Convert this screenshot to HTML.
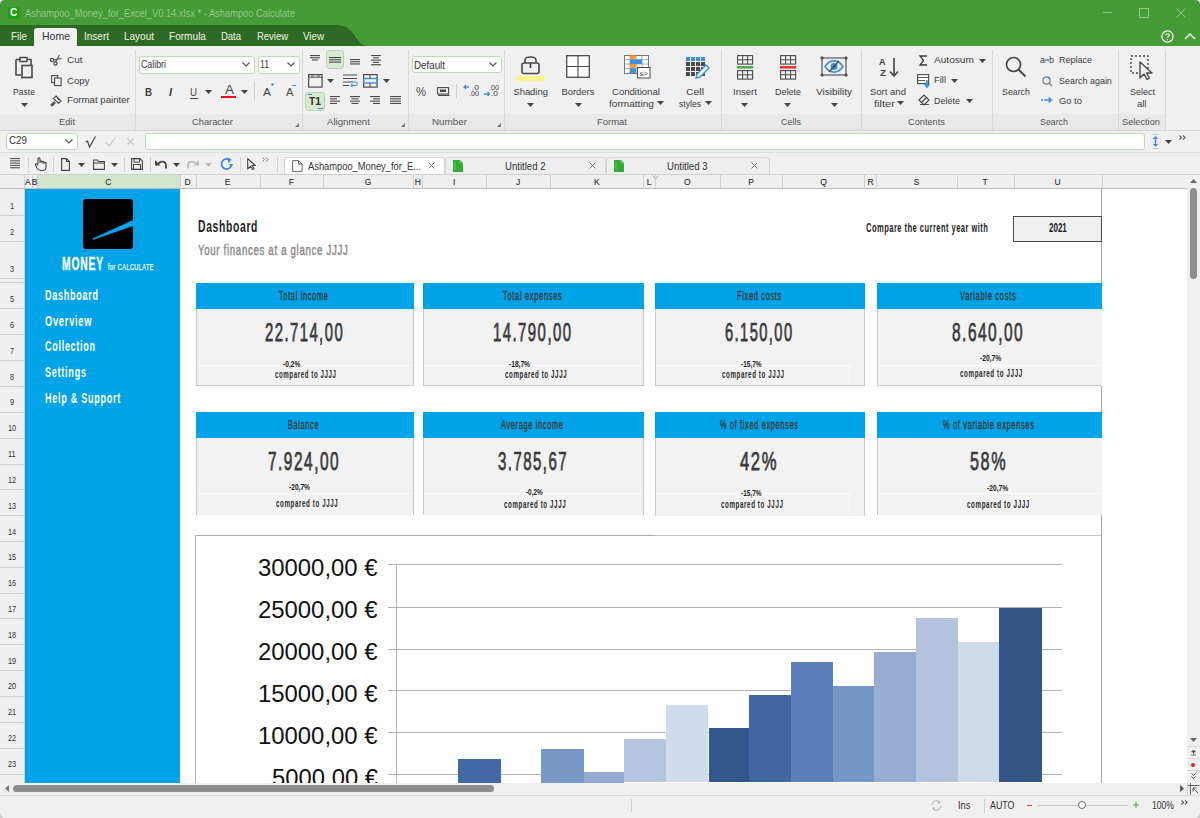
<!DOCTYPE html><html><head><meta charset="utf-8"><style>
html,body{margin:0;padding:0;}
body{width:1200px;height:818px;position:relative;overflow:hidden;background:#f0f0f0;font-family:"Liberation Sans", sans-serif;}
svg{overflow:visible}
</style></head><body>
<div style="position:absolute;left:0px;top:0px;width:1200px;height:46px;background:#459b35"></div>
<svg style="position:absolute;left:0px;top:25px;" width="380" height="21" viewBox="0 0 380 21"><path d="M0 0 H336 C347 0 351 5 355 11 C359 17 361 21 369 21 H0 Z" fill="#2d6b24"/></svg>
<div style="position:absolute;left:7.5px;top:7px;width:12.5px;height:12px;background:#1f9e1a;border-radius:2px"></div>
<div style="position:absolute;left:10.20px;top:7.29px;font-size:11px;line-height:11px;color:#fff;font-weight:bold;white-space:nowrap;transform:scaleX(0.9063);transform-origin:0 0;">C</div>
<svg style="position:absolute;left:0px;top:0px;" width="5" height="5" viewBox="0 0 5 5"><path d="M0 0 H4 C2 0.3 0.3 2 0 4 Z" fill="#e8e8e8"/></svg>
<svg style="position:absolute;left:1195px;top:0px;" width="5" height="5" viewBox="0 0 5 5"><path d="M5 0 H1 C3 0.3 4.7 2 5 4 Z" fill="#e8e8e8"/></svg>
<div style="position:absolute;left:25.00px;top:6.98px;font-size:11.6px;line-height:11.6px;color:#91c985;white-space:nowrap;transform:scaleX(0.8038);transform-origin:0 0;">Ashampoo_Money_for_Excel_V0.14.xlsx * - Ashampoo Calculate</div>
<div style="position:absolute;left:1103px;top:12px;width:9px;height:1px;background:#8fcb82"></div>
<div style="position:absolute;left:1139px;top:8px;width:8px;height:8px;border:1px solid #8fcb82"></div>
<svg style="position:absolute;left:1176px;top:8px;" width="10" height="10" viewBox="0 0 10 10"><path d="M0.5 0.5 L9.5 9.5 M9.5 0.5 L0.5 9.5" stroke="#8fcb82" stroke-width="0.9"/></svg>
<svg style="position:absolute;left:1161px;top:30px;" width="13" height="13" viewBox="0 0 13 13"><circle cx="6.5" cy="6.5" r="5.6" fill="none" stroke="#fff" stroke-width="1.2"/><path d="M4.6 5.2 C4.6 3.6 8.4 3.6 8.4 5.2 C8.4 6.4 6.5 6.4 6.5 7.8" fill="none" stroke="#fff" stroke-width="1.1"/><circle cx="6.5" cy="9.6" r="0.7" fill="#fff"/></svg>
<svg style="position:absolute;left:1184px;top:33px;" width="12" height="7" viewBox="0 0 12 7"><path d="M1 6 L6 1 L11 6" fill="none" stroke="#fff" stroke-width="1.4"/></svg>
<div style="position:absolute;left:34px;top:27.5px;width:43px;height:19px;background:#f0f0f0;border-radius:3px 3px 0 0"></div>
<div style="position:absolute;left:10.50px;top:31.02px;font-size:10.6px;line-height:10.6px;color:#f4f4e4;white-space:nowrap;transform:scaleX(0.9368);transform-origin:0 0;">File</div>
<div style="position:absolute;left:41.50px;top:31.02px;font-size:10.6px;line-height:10.6px;color:#333;white-space:nowrap;transform:scaleX(0.9903);transform-origin:0 0;">Home</div>
<div style="position:absolute;left:83.50px;top:31.02px;font-size:10.6px;line-height:10.6px;color:#f4f4e4;white-space:nowrap;transform:scaleX(0.9431);transform-origin:0 0;">Insert</div>
<div style="position:absolute;left:123.50px;top:31.02px;font-size:10.6px;line-height:10.6px;color:#f4f4e4;white-space:nowrap;transform:scaleX(0.9427);transform-origin:0 0;">Layout</div>
<div style="position:absolute;left:168.50px;top:31.02px;font-size:10.6px;line-height:10.6px;color:#f4f4e4;white-space:nowrap;transform:scaleX(0.9518);transform-origin:0 0;">Formula</div>
<div style="position:absolute;left:220.50px;top:31.02px;font-size:10.6px;line-height:10.6px;color:#f4f4e4;white-space:nowrap;transform:scaleX(0.8933);transform-origin:0 0;">Data</div>
<div style="position:absolute;left:256.50px;top:31.02px;font-size:10.6px;line-height:10.6px;color:#f4f4e4;white-space:nowrap;transform:scaleX(0.8920);transform-origin:0 0;">Review</div>
<div style="position:absolute;left:302.50px;top:31.02px;font-size:10.6px;line-height:10.6px;color:#f4f4e4;white-space:nowrap;transform:scaleX(0.9217);transform-origin:0 0;">View</div>
<div style="position:absolute;left:0px;top:46px;width:1200px;height:84px;background:#f0f0f0"></div>
<div style="position:absolute;left:0px;top:114px;width:1165px;height:16px;background:#e9e9e9"></div>
<div style="position:absolute;left:0px;top:130px;width:1200px;height:1px;background:#d4d4d4"></div>
<div style="position:absolute;left:135px;top:50px;width:1px;height:80px;background:#d9d9d9"></div>
<div style="position:absolute;left:302px;top:50px;width:1px;height:80px;background:#d9d9d9"></div>
<div style="position:absolute;left:408px;top:50px;width:1px;height:80px;background:#d9d9d9"></div>
<div style="position:absolute;left:504px;top:50px;width:1px;height:80px;background:#d9d9d9"></div>
<div style="position:absolute;left:721px;top:50px;width:1px;height:80px;background:#d9d9d9"></div>
<div style="position:absolute;left:861px;top:50px;width:1px;height:80px;background:#d9d9d9"></div>
<div style="position:absolute;left:992px;top:50px;width:1px;height:80px;background:#d9d9d9"></div>
<div style="position:absolute;left:1118px;top:50px;width:1px;height:80px;background:#d9d9d9"></div>
<div style="position:absolute;left:1165px;top:50px;width:1px;height:80px;background:#d9d9d9"></div>
<svg style="position:absolute;left:15px;top:56px;" width="19" height="23" viewBox="0 0 19 23"><path d="M1 3.5 H5 M13 3.5 H16 V9 M1 3.5 V19 H6" fill="none" stroke="#4a4a4a" stroke-width="1.6"/><path d="M5 1.5 H12 V5.5 H5 Z" fill="none" stroke="#4a4a4a" stroke-width="1.5"/><rect x="7" y="9.5" width="10" height="12" fill="none" stroke="#4a4a4a" stroke-width="1.6"/></svg>
<div style="position:absolute;left:13.00px;top:87.34px;font-size:9.4px;line-height:9.4px;color:#3c3c3c;white-space:nowrap;transform:scaleX(0.9153);transform-origin:0 0;">Paste</div>
<svg style="position:absolute;left:20.5px;top:102.5px;" width="7" height="4" viewBox="0 0 7 4"><path d="M0 0 H7 L3.5 4 Z" fill="#444"/></svg>
<svg style="position:absolute;left:50px;top:54px;" width="12" height="12" viewBox="0 0 12 12"><circle cx="2" cy="6" r="1.6" fill="none" stroke="#4a4a4a" stroke-width="1.2"/><circle cx="5.5" cy="9.5" r="1.6" fill="none" stroke="#4a4a4a" stroke-width="1.2"/><path d="M3.5 6 L11.5 4.5 M5.5 8 L9.5 1" stroke="#4a4a4a" stroke-width="1.1"/></svg>
<div style="position:absolute;left:67.00px;top:55.14px;font-size:9.4px;line-height:9.4px;color:#3c3c3c;white-space:nowrap;transform:scaleX(1.0597);transform-origin:0 0;">Cut</div>
<svg style="position:absolute;left:51px;top:75px;" width="11" height="11" viewBox="0 0 11 11"><rect x="0.6" y="0.6" width="6" height="7" fill="none" stroke="#4a4a4a" stroke-width="1.1"/><rect x="3.6" y="3.1" width="6.5" height="7.5" fill="#f0f0f0" stroke="#4a4a4a" stroke-width="1.1"/></svg>
<div style="position:absolute;left:67.00px;top:75.54px;font-size:9.4px;line-height:9.4px;color:#3c3c3c;white-space:nowrap;transform:scaleX(1.0254);transform-origin:0 0;">Copy</div>
<svg style="position:absolute;left:50px;top:95px;" width="12" height="12" viewBox="0 0 12 12"><path d="M6 1 L11 6 L8.5 8.5 L3.5 3.5 Z M4.5 6.5 L1 10 L2 11 L5.5 7.5" fill="none" stroke="#4a4a4a" stroke-width="1.2"/><path d="M7 3 L9 5" stroke="#4a4a4a" stroke-width="1"/></svg>
<div style="position:absolute;left:67.00px;top:95.34px;font-size:9.4px;line-height:9.4px;color:#3c3c3c;white-space:nowrap;transform:scaleX(1.0308);transform-origin:0 0;">Format painter</div>
<div style="position:absolute;left:59.00px;top:116.84px;font-size:9.4px;line-height:9.4px;color:#555;white-space:nowrap;transform:scaleX(0.9878);transform-origin:0 0;">Edit</div>
<div style="position:absolute;left:138.5px;top:56px;width:116px;height:17.5px;background:#fff;border:1px solid #bcdcb4;border-radius:3px;box-sizing:border-box"></div>
<div style="position:absolute;left:141.00px;top:59.19px;font-size:11px;line-height:11px;color:#333;white-space:nowrap;transform:scaleX(0.8020);transform-origin:0 0;">Calibri</div>
<svg style="position:absolute;left:241.5px;top:62px;" width="8" height="5" viewBox="0 0 8 5"><path d="M0.5 0.5 L4 4 L7.5 0.5" fill="none" stroke="#555" stroke-width="1.2"/></svg>
<div style="position:absolute;left:257.5px;top:56px;width:42px;height:17.5px;background:#fff;border:1px solid #bcdcb4;border-radius:3px;box-sizing:border-box"></div>
<div style="position:absolute;left:260.00px;top:59.19px;font-size:11px;line-height:11px;color:#333;white-space:nowrap;transform:scaleX(0.7883);transform-origin:0 0;">11</div>
<svg style="position:absolute;left:286.5px;top:62px;" width="8" height="5" viewBox="0 0 8 5"><path d="M0.5 0.5 L4 4 L7.5 0.5" fill="none" stroke="#555" stroke-width="1.2"/></svg>
<div style="position:absolute;left:144.50px;top:86.69px;font-size:11px;line-height:11px;color:#444;font-weight:bold;white-space:nowrap;transform:scaleX(0.8812);transform-origin:0 0;">B</div>
<div style="position:absolute;left:168.97px;top:86.69px;font-size:11px;line-height:11px;color:#444;white-space:nowrap;font-style:italic;font-weight:bold">I</div>
<div style="position:absolute;left:190.00px;top:86.69px;font-size:11px;line-height:11px;color:#444;white-space:nowrap;transform:scaleX(0.8812);transform-origin:0 0;">U</div>
<div style="position:absolute;left:190px;top:97.5px;width:8px;height:1px;background:#444"></div>
<svg style="position:absolute;left:204.5px;top:90px;" width="7" height="4" viewBox="0 0 7 4"><path d="M0 0 H7 L3.5 4 Z" fill="#444"/></svg>
<div style="position:absolute;left:224.50px;top:84.34px;font-size:12px;line-height:12px;color:#444;white-space:nowrap;transform:scaleX(1.1244);transform-origin:0 0;">A</div>
<div style="position:absolute;left:221px;top:95.5px;width:15px;height:2.5px;background:#e81123"></div>
<svg style="position:absolute;left:240.5px;top:90px;" width="7" height="4" viewBox="0 0 7 4"><path d="M0 0 H7 L3.5 4 Z" fill="#444"/></svg>
<div style="position:absolute;left:254px;top:81px;width:1px;height:19px;background:#cfcfcf"></div>
<div style="position:absolute;left:263.00px;top:86.69px;font-size:11px;line-height:11px;color:#444;white-space:nowrap;transform:scaleX(1.0903);transform-origin:0 0;">A</div>
<svg style="position:absolute;left:271px;top:83px;" width="3" height="3" viewBox="0 0 3 3"><circle cx="1.5" cy="1.5" r="1.2" fill="#3b8ee0"/></svg>
<div style="position:absolute;left:286.25px;top:86.69px;font-size:11px;line-height:11px;color:#444;white-space:nowrap;transform:scaleX(1.0222);transform-origin:0 0;">A</div>
<div style="position:absolute;left:292px;top:85px;width:4px;height:1px;background:#3b8ee0"></div>
<div style="position:absolute;left:191.50px;top:116.84px;font-size:9.4px;line-height:9.4px;color:#555;white-space:nowrap;transform:scaleX(0.9935);transform-origin:0 0;">Character</div>
<svg style="position:absolute;left:295px;top:123px;" width="4" height="4" viewBox="0 0 4 4"><path d="M4 0 V4 H0 Z" fill="#777"/></svg>
<div style="position:absolute;left:326px;top:50px;width:18px;height:19px;background:#d9ead3;border:1px solid #b5d6ac;border-radius:3px;box-sizing:border-box"></div>
<svg style="position:absolute;left:310px;top:55px;" width="20" height="20" viewBox="0 0 20 20"><rect x="0" y="0.0" width="10" height="1.1" fill="#4a4a4a"/><rect x="0" y="2.2" width="10" height="1.1" fill="#4a4a4a"/><rect x="2" y="4.4" width="6" height="1.1" fill="#4a4a4a"/></svg>
<svg style="position:absolute;left:329px;top:57px;" width="20" height="20" viewBox="0 0 20 20"><rect x="0" y="0.0" width="12" height="1.1" fill="#4a4a4a"/><rect x="0" y="2.3" width="12" height="1.1" fill="#4a4a4a"/><rect x="0" y="4.6" width="12" height="1.1" fill="#4a4a4a"/></svg>
<svg style="position:absolute;left:350px;top:59px;" width="20" height="20" viewBox="0 0 20 20"><rect x="0" y="0.0" width="10" height="1.1" fill="#4a4a4a"/><rect x="0" y="2.2" width="10" height="1.1" fill="#4a4a4a"/><rect x="0" y="4.4" width="10" height="1.1" fill="#4a4a4a"/></svg>
<svg style="position:absolute;left:371px;top:55px;" width="20" height="20" viewBox="0 0 20 20"><rect x="0" y="0.0" width="10" height="1.1" fill="#4a4a4a"/><rect x="2" y="2.3" width="6" height="1.1" fill="#4a4a4a"/><rect x="0" y="4.6" width="10" height="1.1" fill="#4a4a4a"/><rect x="2" y="6.8999999999999995" width="6" height="1.1" fill="#4a4a4a"/><rect x="0" y="9.2" width="10" height="1.1" fill="#4a4a4a"/></svg>
<svg style="position:absolute;left:308px;top:74px;" width="15" height="14" viewBox="0 0 15 14"><rect x="0.6" y="0.6" width="13.5" height="12.5" fill="none" stroke="#4a4a4a" stroke-width="1.2"/><path d="M0.6 3.2 H14" stroke="#4a4a4a" stroke-width="1"/><path d="M3 2 H6 M9 2 H12" stroke="#4a4a4a" stroke-width="0.8"/></svg>
<svg style="position:absolute;left:326.5px;top:79px;" width="7" height="4" viewBox="0 0 7 4"><path d="M0 0 H7 L3.5 4 Z" fill="#444"/></svg>
<svg style="position:absolute;left:343px;top:74px;" width="15" height="14" viewBox="0 0 15 14"><path d="M0 1 H14 M0 4.5 H14 M0 8 H10 M0 11.5 H6" stroke="#4a4a4a" stroke-width="1.1"/><path d="M10 8 H13 C14.5 8 14.5 11.5 13 11.5 H8 M9.5 10 L8 11.5 L9.5 13" fill="none" stroke="#3b8ee0" stroke-width="1.1"/></svg>
<svg style="position:absolute;left:363px;top:74px;" width="15" height="14" viewBox="0 0 15 14"><rect x="0.6" y="0.6" width="13.5" height="12.5" fill="none" stroke="#4a4a4a" stroke-width="1.2"/><rect x="0.6" y="4.5" width="13.5" height="4.5" fill="none" stroke="#3b8ee0" stroke-width="1.4"/><path d="M7 0.6 V4.5 M7 9 V13" stroke="#4a4a4a" stroke-width="1"/></svg>
<svg style="position:absolute;left:382.5px;top:79px;" width="7" height="4" viewBox="0 0 7 4"><path d="M0 0 H7 L3.5 4 Z" fill="#444"/></svg>
<div style="position:absolute;left:305px;top:92px;width:20px;height:19px;background:#d9ead3;border:1px solid #b5d6ac;border-radius:3px;box-sizing:border-box"></div>
<div style="position:absolute;left:309.00px;top:96.19px;font-size:11px;line-height:11px;color:#333;font-weight:bold;white-space:nowrap;transform:scaleX(0.9349);transform-origin:0 0;">T1</div>
<div style="position:absolute;left:308px;top:93.5px;width:4px;height:1px;background:#3b8ee0"></div>
<div style="position:absolute;left:318px;top:108px;width:5px;height:1px;background:#3b8ee0"></div>
<svg style="position:absolute;left:330px;top:96px;" width="20" height="20" viewBox="0 0 20 20"><rect x="0" y="0.0" width="10" height="1.1" fill="#4a4a4a"/><rect x="0" y="2.3" width="7" height="1.1" fill="#4a4a4a"/><rect x="0" y="4.6" width="10" height="1.1" fill="#4a4a4a"/><rect x="0" y="6.8999999999999995" width="7" height="1.1" fill="#4a4a4a"/></svg>
<svg style="position:absolute;left:350px;top:96px;" width="20" height="20" viewBox="0 0 20 20"><rect x="0" y="0.0" width="10" height="1.1" fill="#4a4a4a"/><rect x="1.5" y="2.3" width="7" height="1.1" fill="#4a4a4a"/><rect x="0" y="4.6" width="10" height="1.1" fill="#4a4a4a"/><rect x="1.5" y="6.8999999999999995" width="7" height="1.1" fill="#4a4a4a"/></svg>
<svg style="position:absolute;left:370px;top:96px;" width="20" height="20" viewBox="0 0 20 20"><rect x="0" y="0.0" width="10" height="1.1" fill="#4a4a4a"/><rect x="3" y="2.3" width="7" height="1.1" fill="#4a4a4a"/><rect x="0" y="4.6" width="10" height="1.1" fill="#4a4a4a"/><rect x="3" y="6.8999999999999995" width="7" height="1.1" fill="#4a4a4a"/></svg>
<svg style="position:absolute;left:390px;top:96px;" width="20" height="20" viewBox="0 0 20 20"><rect x="0" y="0.0" width="11" height="1.1" fill="#4a4a4a"/><rect x="0" y="2.3" width="11" height="1.1" fill="#4a4a4a"/><rect x="0" y="4.6" width="11" height="1.1" fill="#4a4a4a"/><rect x="0" y="6.8999999999999995" width="11" height="1.1" fill="#4a4a4a"/></svg>
<div style="position:absolute;left:326.50px;top:116.84px;font-size:9.4px;line-height:9.4px;color:#555;white-space:nowrap;transform:scaleX(1.0288);transform-origin:0 0;">Alignment</div>
<svg style="position:absolute;left:401px;top:123px;" width="4" height="4" viewBox="0 0 4 4"><path d="M4 0 V4 H0 Z" fill="#777"/></svg>
<div style="position:absolute;left:411.5px;top:56.4px;width:90px;height:17px;background:#fff;border:1px solid #bcdcb4;border-radius:3px;box-sizing:border-box"></div>
<div style="position:absolute;left:414.00px;top:59.59px;font-size:11px;line-height:11px;color:#333;white-space:nowrap;transform:scaleX(0.8895);transform-origin:0 0;">Default</div>
<svg style="position:absolute;left:488.5px;top:62.4px;" width="8" height="5" viewBox="0 0 8 5"><path d="M0.5 0.5 L4 4 L7.5 0.5" fill="none" stroke="#555" stroke-width="1.2"/></svg>
<div style="position:absolute;left:416.00px;top:85.84px;font-size:12px;line-height:12px;color:#4a4a4a;white-space:nowrap;transform:scaleX(0.9372);transform-origin:0 0;">%</div>
<svg style="position:absolute;left:437px;top:87px;" width="13" height="9" viewBox="0 0 13 9"><rect x="0.6" y="0.6" width="11" height="6.5" fill="none" stroke="#4a4a4a" stroke-width="1.1"/><rect x="3" y="2.5" width="6" height="2.5" fill="#4a4a4a"/><path d="M1 8.5 H12.5" stroke="#4a4a4a" stroke-width="1"/></svg>
<div style="position:absolute;left:456px;top:84px;width:1px;height:14px;background:#cfcfcf"></div>
<div style="position:absolute;left:472.00px;top:84.23px;font-size:8px;line-height:8px;color:#444;white-space:nowrap;transform:scaleX(1.0493);transform-origin:0 0;">.0</div>
<div style="position:absolute;left:469.00px;top:90.23px;font-size:8px;line-height:8px;color:#444;white-space:nowrap;transform:scaleX(0.8993);transform-origin:0 0;">.00</div>
<svg style="position:absolute;left:463px;top:84px;" width="7" height="6" viewBox="0 0 7 6"><path d="M6 3 H1 M3 1 L1 3 L3 5" fill="none" stroke="#3b8ee0" stroke-width="1.3"/></svg>
<div style="position:absolute;left:489.00px;top:84.23px;font-size:8px;line-height:8px;color:#444;white-space:nowrap;transform:scaleX(0.8993);transform-origin:0 0;">.00</div>
<div style="position:absolute;left:491.00px;top:90.23px;font-size:8px;line-height:8px;color:#444;white-space:nowrap;transform:scaleX(1.0493);transform-origin:0 0;">.0</div>
<svg style="position:absolute;left:484px;top:91px;" width="7" height="6" viewBox="0 0 7 6"><path d="M0 3 H5.5 M3.5 1 L5.5 3 L3.5 5" fill="none" stroke="#3b8ee0" stroke-width="1.3"/></svg>
<div style="position:absolute;left:431.50px;top:116.84px;font-size:9.4px;line-height:9.4px;color:#555;white-space:nowrap;transform:scaleX(1.0470);transform-origin:0 0;">Number</div>
<svg style="position:absolute;left:497px;top:123px;" width="4" height="4" viewBox="0 0 4 4"><path d="M4 0 V4 H0 Z" fill="#777"/></svg>
<svg style="position:absolute;left:521px;top:55px;" width="19" height="20" viewBox="0 0 19 20"><path d="M4 8 V5 C4 1 15 1 15 5 V8" fill="none" stroke="#4a4a4a" stroke-width="1.6"/><rect x="1" y="8" width="17" height="10.5" rx="2" fill="none" stroke="#4a4a4a" stroke-width="1.6"/><path d="M9.5 8 V13" stroke="#4a4a4a" stroke-width="1.8"/></svg>
<div style="position:absolute;left:516px;top:76px;width:29px;height:5px;background:#fff38a"></div>
<div style="position:absolute;left:513.45px;top:87.34px;font-size:9.4px;line-height:9.4px;color:#3c3c3c;white-space:nowrap;">Shading</div>
<svg style="position:absolute;left:527.2px;top:102.5px;" width="7" height="4" viewBox="0 0 7 4"><path d="M0 0 H7 L3.5 4 Z" fill="#444"/></svg>
<svg style="position:absolute;left:566px;top:55px;" width="24" height="23" viewBox="0 0 24 23"><rect x="0.7" y="0.7" width="22.6" height="21.6" fill="#fff" stroke="#4a4a4a" stroke-width="1.3"/><path d="M12 0.7 V22.3 M0.7 11.5 H23.3" stroke="#4a4a4a" stroke-width="1.1"/></svg>
<div style="position:absolute;left:561.50px;top:87.34px;font-size:9.4px;line-height:9.4px;color:#3c3c3c;white-space:nowrap;">Borders</div>
<svg style="position:absolute;left:574.5px;top:102.5px;" width="7" height="4" viewBox="0 0 7 4"><path d="M0 0 H7 L3.5 4 Z" fill="#444"/></svg>
<svg style="position:absolute;left:624px;top:55px;" width="27" height="24" viewBox="0 0 27 24"><rect x="0.5" y="0.5" width="24" height="18" fill="#fff" stroke="#777" stroke-width="1"/><path d="M0.5 4.5 H24.5" stroke="#999" stroke-width="0.8"/><path d="M0.5 9 H24.5" stroke="#999" stroke-width="0.8"/><path d="M0.5 13.5 H24.5" stroke="#999" stroke-width="0.8"/><path d="M6 0.5 V18.5" stroke="#999" stroke-width="0.8"/><path d="M12 0.5 V18.5" stroke="#999" stroke-width="0.8"/><path d="M18 0.5 V18.5" stroke="#999" stroke-width="0.8"/><rect x="6" y="0.5" width="6" height="4" fill="#f39c35"/><rect x="6" y="4.5" width="12" height="4.5" fill="#3b8ee0"/><rect x="6" y="9" width="6" height="4.5" fill="#f39c35"/><rect x="6" y="13.5" width="6" height="5" fill="#3b8ee0"/><rect x="13.5" y="12.5" width="12.5" height="10.5" fill="#fff" stroke="#4a4a4a" stroke-width="1"/><text x="19.7" y="20.5" font-size="7.5" text-anchor="middle" fill="#333" font-family="Liberation Sans">≤&gt;</text></svg>
<div style="position:absolute;left:612.00px;top:87.34px;font-size:9.4px;line-height:9.4px;color:#3c3c3c;white-space:nowrap;transform:scaleX(1.0206);transform-origin:0 0;">Conditional</div>
<div style="position:absolute;left:608.50px;top:99.34px;font-size:9.4px;line-height:9.4px;color:#3c3c3c;white-space:nowrap;transform:scaleX(1.0768);transform-origin:0 0;">formatting</div>
<svg style="position:absolute;left:656.5px;top:101px;" width="7" height="4" viewBox="0 0 7 4"><path d="M0 0 H7 L3.5 4 Z" fill="#444"/></svg>
<svg style="position:absolute;left:686px;top:57px;" width="24" height="23" viewBox="0 0 24 23"><rect x="0" y="0" width="4" height="4" fill="#3b8ee0"/><rect x="5" y="0" width="4" height="4" fill="#3b8ee0"/><rect x="10" y="0" width="4" height="4" fill="#3b8ee0"/><rect x="15" y="0" width="4" height="4" fill="#3b8ee0"/><rect x="0" y="5" width="4" height="4" fill="#4a4a4a"/><rect x="5" y="5" width="4" height="4" fill="#4a4a4a"/><rect x="10" y="5" width="4" height="4" fill="#4a4a4a"/><rect x="15" y="5" width="4" height="4" fill="#4a4a4a"/><rect x="0" y="10" width="4" height="4" fill="#4a4a4a"/><rect x="5" y="10" width="4" height="4" fill="#4a4a4a"/><rect x="10" y="10" width="4" height="4" fill="#4a4a4a"/><rect x="15" y="10" width="4" height="4" fill="#4a4a4a"/><rect x="0" y="15" width="4" height="4" fill="#4a4a4a"/><rect x="5" y="15" width="4" height="4" fill="#4a4a4a"/><rect x="10" y="15" width="4" height="4" fill="#4a4a4a"/><rect x="15" y="15" width="4" height="4" fill="#4a4a4a"/><path d="M10 21 L11 17 L20 8 L23 11 L14 20 Z" fill="#f0f0f0" stroke="#3b8ee0" stroke-width="1.4"/></svg>
<div style="position:absolute;left:686.00px;top:87.34px;font-size:9.4px;line-height:9.4px;color:#3c3c3c;white-space:nowrap;transform:scaleX(1.1116);transform-origin:0 0;">Cell</div>
<div style="position:absolute;left:679.00px;top:99.34px;font-size:9.4px;line-height:9.4px;color:#3c3c3c;white-space:nowrap;transform:scaleX(0.9156);transform-origin:0 0;">styles</div>
<svg style="position:absolute;left:704.5px;top:101px;" width="7" height="4" viewBox="0 0 7 4"><path d="M0 0 H7 L3.5 4 Z" fill="#444"/></svg>
<div style="position:absolute;left:597.00px;top:116.84px;font-size:9.4px;line-height:9.4px;color:#555;white-space:nowrap;transform:scaleX(1.0078);transform-origin:0 0;">Format</div>
<svg style="position:absolute;left:737px;top:55px;" width="17" height="25" viewBox="0 0 17 25"><rect x="0.6" y="0.6" width="15" height="8.5" fill="none" stroke="#4a4a4a" stroke-width="1.1"/><path d="M5.6 0 V9 M10.6 0 V9 M0.6 4.8 H15.6" stroke="#4a4a4a" stroke-width="1"/><rect x="0.6" y="15.6" width="15" height="8.5" fill="none" stroke="#4a4a4a" stroke-width="1.1"/><path d="M5.6 15 V24 M10.6 15 V24 M0.6 19.8 H15.6" stroke="#4a4a4a" stroke-width="1"/><rect x="0" y="11" width="16.2" height="2.6" fill="#4caf50"/></svg>
<div style="position:absolute;left:732.60px;top:87.34px;font-size:9.4px;line-height:9.4px;color:#3c3c3c;white-space:nowrap;transform:scaleX(1.0210);transform-origin:0 0;">Insert</div>
<svg style="position:absolute;left:741.1px;top:102.5px;" width="7" height="4" viewBox="0 0 7 4"><path d="M0 0 H7 L3.5 4 Z" fill="#444"/></svg>
<svg style="position:absolute;left:780px;top:55px;" width="17" height="25" viewBox="0 0 17 25"><rect x="0.6" y="0.6" width="15" height="8.5" fill="none" stroke="#4a4a4a" stroke-width="1.1"/><path d="M5.6 0 V9 M10.6 0 V9 M0.6 4.8 H15.6" stroke="#4a4a4a" stroke-width="1"/><rect x="0.6" y="15.6" width="15" height="8.5" fill="none" stroke="#4a4a4a" stroke-width="1.1"/><path d="M5.6 15 V24 M10.6 15 V24 M0.6 19.8 H15.6" stroke="#4a4a4a" stroke-width="1"/><rect x="0" y="11" width="16.2" height="2.6" fill="#e53935"/></svg>
<div style="position:absolute;left:774.60px;top:87.34px;font-size:9.4px;line-height:9.4px;color:#3c3c3c;white-space:nowrap;transform:scaleX(0.9569);transform-origin:0 0;">Delete</div>
<svg style="position:absolute;left:784.1px;top:102.5px;" width="7" height="4" viewBox="0 0 7 4"><path d="M0 0 H7 L3.5 4 Z" fill="#444"/></svg>
<svg style="position:absolute;left:820px;top:56px;" width="28" height="22" viewBox="0 0 28 22"><rect x="2" y="2" width="24" height="17" fill="none" stroke="#4a4a4a" stroke-width="1.1"/><path d="M0 2 H4 M24 2 H28 M0 19 H4 M24 19 H28 M2 0 V4 M26 0 V4 M2 17 V21 M26 17 V21" stroke="#4a4a4a" stroke-width="1.1"/><path d="M5 10.5 C10 3 18 3 23 10.5 C18 18 10 18 5 10.5 Z" fill="none" stroke="#3b8ee0" stroke-width="1.6"/><circle cx="14" cy="10.5" r="3.4" fill="#3b8ee0"/><path d="M9 16 L19 5" stroke="#4a4a4a" stroke-width="1.3"/></svg>
<div style="position:absolute;left:816.00px;top:87.34px;font-size:9.4px;line-height:9.4px;color:#3c3c3c;white-space:nowrap;transform:scaleX(1.0657);transform-origin:0 0;">Visibility</div>
<svg style="position:absolute;left:830.5px;top:102.5px;" width="7" height="4" viewBox="0 0 7 4"><path d="M0 0 H7 L3.5 4 Z" fill="#444"/></svg>
<div style="position:absolute;left:781.00px;top:116.84px;font-size:9.4px;line-height:9.4px;color:#555;white-space:nowrap;transform:scaleX(0.9573);transform-origin:0 0;">Cells</div>
<div style="position:absolute;left:879.25px;top:57.26px;font-size:9.5px;line-height:9.5px;color:#3c3c3c;font-weight:bold;white-space:nowrap;transform:scaleX(0.9474);transform-origin:0 0;">A</div>
<div style="position:absolute;left:879.50px;top:67.96px;font-size:9.5px;line-height:9.5px;color:#3c3c3c;font-weight:bold;white-space:nowrap;transform:scaleX(1.0341);transform-origin:0 0;">Z</div>
<svg style="position:absolute;left:889px;top:57px;" width="10" height="21" viewBox="0 0 10 21"><path d="M5 1 V19 M1 14.5 L5 19 L9 14.5" fill="none" stroke="#4a4a4a" stroke-width="1.7"/></svg>
<div style="position:absolute;left:870.00px;top:87.34px;font-size:9.4px;line-height:9.4px;color:#3c3c3c;white-space:nowrap;transform:scaleX(1.0132);transform-origin:0 0;">Sort and</div>
<div style="position:absolute;left:873.50px;top:99.34px;font-size:9.4px;line-height:9.4px;color:#3c3c3c;white-space:nowrap;transform:scaleX(1.1826);transform-origin:0 0;">filter</div>
<svg style="position:absolute;left:896.5px;top:101px;" width="7" height="4" viewBox="0 0 7 4"><path d="M0 0 H7 L3.5 4 Z" fill="#444"/></svg>
<svg style="position:absolute;left:919px;top:55px;" width="9" height="11" viewBox="0 0 9 11"><path d="M8 1 H1 L4.6 5.5 L1 10 H8" fill="none" stroke="#3c3c3c" stroke-width="1.3"/></svg>
<div style="position:absolute;left:934.00px;top:55.24px;font-size:9.4px;line-height:9.4px;color:#3c3c3c;white-space:nowrap;transform:scaleX(1.0784);transform-origin:0 0;">Autosum</div>
<svg style="position:absolute;left:978.5px;top:58.5px;" width="7" height="4" viewBox="0 0 7 4"><path d="M0 0 H7 L3.5 4 Z" fill="#444"/></svg>
<svg style="position:absolute;left:917px;top:74px;" width="14" height="14" viewBox="0 0 14 14"><rect x="0.6" y="0.6" width="11" height="9" fill="#fff" stroke="#4a4a4a" stroke-width="1.1"/><path d="M0.6 3.5 H11.6 M0.6 6.5 H8" stroke="#4a4a4a" stroke-width="0.9"/><path d="M10 6 V12.5 M7.5 10 L10 13 L12.5 10" fill="none" stroke="#3b8ee0" stroke-width="1.6"/></svg>
<div style="position:absolute;left:934.00px;top:75.24px;font-size:9.4px;line-height:9.4px;color:#3c3c3c;white-space:nowrap;">Fill</div>
<svg style="position:absolute;left:950.5px;top:78.5px;" width="7" height="4" viewBox="0 0 7 4"><path d="M0 0 H7 L3.5 4 Z" fill="#444"/></svg>
<svg style="position:absolute;left:918px;top:94px;" width="12" height="11" viewBox="0 0 12 11"><path d="M1 6 L6 1 L11 6 L6 11 Z M3.5 8.5 L8.5 3.5" fill="none" stroke="#4a4a4a" stroke-width="1.2" transform="rotate(0)"/><path d="M2 10.5 H11" stroke="#4a4a4a" stroke-width="1"/></svg>
<div style="position:absolute;left:934.00px;top:95.74px;font-size:9.4px;line-height:9.4px;color:#3c3c3c;white-space:nowrap;transform:scaleX(0.9569);transform-origin:0 0;">Delete</div>
<svg style="position:absolute;left:965.5px;top:98.5px;" width="7" height="4" viewBox="0 0 7 4"><path d="M0 0 H7 L3.5 4 Z" fill="#444"/></svg>
<div style="position:absolute;left:907.50px;top:116.84px;font-size:9.4px;line-height:9.4px;color:#555;white-space:nowrap;transform:scaleX(0.9835);transform-origin:0 0;">Contents</div>
<svg style="position:absolute;left:1005px;top:56px;" width="22" height="22" viewBox="0 0 22 22"><circle cx="8.5" cy="8.5" r="7" fill="none" stroke="#4a4a4a" stroke-width="1.7"/><path d="M13.5 13.5 L20.5 20.5" stroke="#4a4a4a" stroke-width="1.9"/></svg>
<div style="position:absolute;left:1001.50px;top:87.34px;font-size:9.4px;line-height:9.4px;color:#3c3c3c;white-space:nowrap;transform:scaleX(0.9402);transform-origin:0 0;">Search</div>
<div style="position:absolute;left:1040.00px;top:55.34px;font-size:9.4px;line-height:9.4px;color:#3c3c3c;white-space:nowrap;transform:scaleX(0.9565);transform-origin:0 0;">a</div>
<div style="position:absolute;left:1049.00px;top:55.34px;font-size:9.4px;line-height:9.4px;color:#3c3c3c;white-space:nowrap;transform:scaleX(0.9565);transform-origin:0 0;">b</div>
<svg style="position:absolute;left:1045px;top:58px;" width="5" height="4" viewBox="0 0 5 4"><path d="M0 2 H4" stroke="#3b8ee0" stroke-width="1.5"/></svg>
<div style="position:absolute;left:1059.00px;top:55.34px;font-size:9.4px;line-height:9.4px;color:#3c3c3c;white-space:nowrap;transform:scaleX(0.9569);transform-origin:0 0;">Replace</div>
<svg style="position:absolute;left:1042px;top:76px;" width="11" height="11" viewBox="0 0 11 11"><circle cx="4.5" cy="4.5" r="3.6" fill="none" stroke="#777" stroke-width="1.2"/><path d="M7 7 L10 10" stroke="#777" stroke-width="1.3"/><path d="M6 2 L8 3 L7 0.5" fill="none" stroke="#3b8ee0" stroke-width="1"/></svg>
<div style="position:absolute;left:1059.00px;top:76.34px;font-size:9.4px;line-height:9.4px;color:#3c3c3c;white-space:nowrap;transform:scaleX(0.9568);transform-origin:0 0;">Search again</div>
<svg style="position:absolute;left:1041px;top:97px;" width="12" height="6" viewBox="0 0 12 6"><path d="M0 3 H2 M3 3 H10 M7.5 0.5 L10.5 3 L7.5 5.5" fill="none" stroke="#3b8ee0" stroke-width="1.6"/></svg>
<div style="position:absolute;left:1059.00px;top:96.34px;font-size:9.4px;line-height:9.4px;color:#3c3c3c;white-space:nowrap;">Go to</div>
<div style="position:absolute;left:1040.00px;top:116.84px;font-size:9.4px;line-height:9.4px;color:#555;white-space:nowrap;transform:scaleX(0.9402);transform-origin:0 0;">Search</div>
<svg style="position:absolute;left:1130px;top:55px;" width="26" height="25" viewBox="0 0 26 25"><rect x="1" y="1" width="17" height="17" fill="none" stroke="#4a4a4a" stroke-width="1.4" stroke-dasharray="2 2"/><path d="M10 7 L10 23 L14 19 L17 24.5 L19.5 23 L16.5 18 L22 18 Z" fill="#f0f0f0" stroke="#4a4a4a" stroke-width="1.4" stroke-linejoin="round"/></svg>
<div style="position:absolute;left:1129.50px;top:87.34px;font-size:9.4px;line-height:9.4px;color:#3c3c3c;white-space:nowrap;transform:scaleX(0.9570);transform-origin:0 0;">Select</div>
<div style="position:absolute;left:1137.25px;top:99.34px;font-size:9.4px;line-height:9.4px;color:#3c3c3c;white-space:nowrap;transform:scaleX(1.0102);transform-origin:0 0;">all</div>
<div style="position:absolute;left:1122.00px;top:116.84px;font-size:9.4px;line-height:9.4px;color:#555;white-space:nowrap;transform:scaleX(0.9827);transform-origin:0 0;">Selection</div>
<div style="position:absolute;left:6px;top:132.5px;width:72px;height:17px;background:#fff;border:1px solid #bcdcb4;border-radius:3px;box-sizing:border-box"></div>
<div style="position:absolute;left:9.00px;top:135.19px;font-size:11px;line-height:11px;color:#333;white-space:nowrap;transform:scaleX(0.8921);transform-origin:0 0;">C29</div>
<svg style="position:absolute;left:65px;top:139px;" width="8" height="5" viewBox="0 0 8 5"><path d="M0.5 0.5 L4 4 L7.5 0.5" fill="none" stroke="#555" stroke-width="1.2"/></svg>
<svg style="position:absolute;left:85px;top:136px;" width="11" height="12" viewBox="0 0 11 12"><path d="M0.5 6 L2.5 5 L4.5 11 L10.5 0.5" fill="none" stroke="#444" stroke-width="1.2"/></svg>
<svg style="position:absolute;left:105px;top:137px;" width="11" height="10" viewBox="0 0 11 10"><path d="M0.5 5 L4 9 L10.5 0.5" fill="none" stroke="#c4c4c4" stroke-width="1.2"/></svg>
<svg style="position:absolute;left:127px;top:138px;" width="7" height="7" viewBox="0 0 7 7"><path d="M0.5 0.5 L6.5 6.5 M6.5 0.5 L0.5 6.5" fill="none" stroke="#c4c4c4" stroke-width="1.1"/></svg>
<div style="position:absolute;left:145px;top:132.5px;width:1000px;height:17px;background:#fff;border:1px solid #bcdcb4;border-radius:3px;box-sizing:border-box"></div>
<svg style="position:absolute;left:1152px;top:133.5px;" width="7" height="15" viewBox="0 0 7 15"><path d="M0.5 0.5 H6.5 M0.5 14.5 H6.5" stroke="#bbb" stroke-width="0.8"/><path d="M3.5 3 V12" stroke="#3b8ee0" stroke-width="1.5"/><path d="M0.8 5 L3.5 2 L6.2 5 Z M0.8 10 L3.5 13 L6.2 10 Z" fill="#3b8ee0"/></svg>
<svg style="position:absolute;left:1165.0px;top:140px;" width="7" height="4" viewBox="0 0 7 4"><path d="M0 0 H7 L3.5 4 Z" fill="#444"/></svg>
<svg style="position:absolute;left:1179px;top:135px;" width="7" height="5" viewBox="0 0 7 5"><path d="M0.5 0.5 L2.5 2.5 L0.5 4.5 M4 0.5 L6 2.5 L4 4.5" fill="none" stroke="#555" stroke-width="1.1"/></svg>
<div style="position:absolute;left:0px;top:152px;width:1200px;height:1px;background:#dcdcdc"></div>
<div style="position:absolute;left:0px;top:153px;width:1200px;height:21px;background:#f0f0f0"></div>
<svg style="position:absolute;left:10px;top:158px;" width="20" height="20" viewBox="0 0 20 20"><rect x="0" y="0.0" width="10" height="1.1" fill="#555"/><rect x="0" y="2.3" width="10" height="1.1" fill="#555"/><rect x="0" y="4.6" width="10" height="1.1" fill="#555"/><rect x="0" y="6.8999999999999995" width="10" height="1.1" fill="#555"/><rect x="0" y="9.2" width="10" height="1.1" fill="#555"/></svg>
<div style="position:absolute;left:28px;top:157px;width:1px;height:15px;background:#d0d0d0"></div>
<div style="position:absolute;left:53px;top:157px;width:1px;height:15px;background:#d0d0d0"></div>
<div style="position:absolute;left:124px;top:157px;width:1px;height:15px;background:#d0d0d0"></div>
<div style="position:absolute;left:150px;top:157px;width:1px;height:15px;background:#d0d0d0"></div>
<div style="position:absolute;left:240px;top:157px;width:1px;height:15px;background:#d0d0d0"></div>
<div style="position:absolute;left:277px;top:157px;width:1px;height:15px;background:#d0d0d0"></div>
<svg style="position:absolute;left:35px;top:157px;" width="12" height="14" viewBox="0 0 12 14"><path d="M3 7 V2 C3 0.5 5 0.5 5 2 V6 M5 5 C5 3.5 7 3.5 7 5 V6.5 M7 5.5 C7 4 9 4 9 5.5 V7 M9 6.5 C9 5 11 5 11 6.5 V10 C11 12 9.5 13.5 7.5 13.5 H5.5 C4 13.5 3 12.5 2 11 L0.5 8 C0.2 7 1.3 6.2 2 7 L3 8.5" fill="none" stroke="#444" stroke-width="1.1"/></svg>
<svg style="position:absolute;left:61px;top:158px;" width="9" height="13" viewBox="0 0 9 13"><path d="M0.6 0.6 H5.5 L8.4 3.5 V12.4 H0.6 Z M5.5 0.6 V3.5 H8.4" fill="none" stroke="#444" stroke-width="1.1"/></svg>
<svg style="position:absolute;left:77.5px;top:162.5px;" width="7" height="4" viewBox="0 0 7 4"><path d="M0 0 H7 L3.5 4 Z" fill="#444"/></svg>
<svg style="position:absolute;left:93px;top:159px;" width="12" height="11" viewBox="0 0 12 11"><path d="M0.6 1 H4.5 L5.5 2.5 H11.4 V10.4 H0.6 Z M0.6 4 H11.4" fill="none" stroke="#444" stroke-width="1.1"/></svg>
<svg style="position:absolute;left:110.5px;top:162.5px;" width="7" height="4" viewBox="0 0 7 4"><path d="M0 0 H7 L3.5 4 Z" fill="#444"/></svg>
<svg style="position:absolute;left:131px;top:158px;" width="12" height="12" viewBox="0 0 12 12"><path d="M0.6 0.6 H9 L11.4 3 V11.4 H0.6 Z" fill="none" stroke="#444" stroke-width="1.1"/><rect x="3" y="0.6" width="5.5" height="3.5" fill="none" stroke="#444" stroke-width="1"/><rect x="2.5" y="6.5" width="7" height="4.9" fill="none" stroke="#444" stroke-width="1"/></svg>
<svg style="position:absolute;left:155px;top:158px;" width="12" height="11" viewBox="0 0 12 11"><path d="M3 6 C5 2.5 11 2.5 11 8 V10.5" fill="none" stroke="#444" stroke-width="1.8"/><path d="M0 2 V7.5 H5.5 Z" fill="#444"/></svg>
<svg style="position:absolute;left:172.5px;top:162.5px;" width="7" height="4" viewBox="0 0 7 4"><path d="M0 0 H7 L3.5 4 Z" fill="#444"/></svg>
<svg style="position:absolute;left:187px;top:158px;" width="12" height="11" viewBox="0 0 12 11"><path d="M9 6 C7 2.5 1 2.5 1 8 V10.5" fill="none" stroke="#bbb" stroke-width="1.8"/><path d="M12 2 V7.5 H6.5 Z" fill="#bbb"/></svg>
<svg style="position:absolute;left:204.5px;top:162.5px;" width="7" height="4" viewBox="0 0 7 4"><path d="M0 0 H7 L3.5 4 Z" fill="#bbb"/></svg>
<svg style="position:absolute;left:220px;top:157px;" width="14" height="14" viewBox="0 0 14 14"><path d="M11.5 7 A5 5 0 1 1 9.5 3" fill="none" stroke="#3b8ee0" stroke-width="1.8"/><path d="M7.5 0.5 L11.5 2.5 L8.5 6.5" fill="#3b8ee0"/><path d="M9 7 H13.5 L11.2 10 Z" fill="#3b8ee0"/></svg>
<svg style="position:absolute;left:247px;top:158px;" width="9" height="12" viewBox="0 0 9 12"><path d="M0.7 0.7 V11 L3.5 8.3 L5.5 11.5 L7 10.8 L5 7.5 L8.3 7.5 Z" fill="#f0f0f0" stroke="#444" stroke-width="1.1" stroke-linejoin="round"/></svg>
<svg style="position:absolute;left:262px;top:157px;" width="7" height="5" viewBox="0 0 7 5"><path d="M0.5 0.5 L2.5 2.5 L0.5 4.5 M4 0.5 L6 2.5 L4 4.5" fill="none" stroke="#777" stroke-width="0.9"/></svg>
<div style="position:absolute;left:284px;top:156.5px;width:161px;height:18px;background:#fff;border:1px solid #d6d6d6;border-bottom:none;border-radius:3px 3px 0 0;box-sizing:border-box"></div>
<svg style="position:absolute;left:292px;top:159.5px;" width="11" height="12" viewBox="0 0 11 12"><path d="M0.6 0.6 H6.5 L10 4 V11.4 H0.6 Z M6.5 0.6 V4 H10" fill="#fff" stroke="#666" stroke-width="1"/></svg>
<div style="position:absolute;left:308.00px;top:161.19px;font-size:11px;line-height:11px;color:#333;white-space:nowrap;transform:scaleX(0.8478);transform-origin:0 0;">Ashampoo_Money_for_E...</div>
<svg style="position:absolute;left:428px;top:162px;" width="7" height="7" viewBox="0 0 7 7"><path d="M0.5 0.5 L6.5 6.5 M6.5 0.5 L0.5 6.5" stroke="#777" stroke-width="1"/></svg>
<div style="position:absolute;left:445px;top:156.5px;width:161px;height:18px;background:#eeeeee;border:1px solid #d6d6d6;border-bottom:none;border-radius:3px 3px 0 0;box-sizing:border-box"></div>
<svg style="position:absolute;left:453px;top:160px;" width="11" height="12" viewBox="0 0 11 12"><path d="M0 0 H7 L10 3 V12 H0 Z" fill="#2fae32"/><path d="M7 0 V3 H10" fill="none" stroke="#8fd98f" stroke-width="0.7"/><path d="M2 2 V10" stroke="#7fd47f" stroke-width="0.6"/></svg>
<div style="position:absolute;left:504.75px;top:161.19px;font-size:11px;line-height:11px;color:#333;white-space:nowrap;transform:scaleX(0.8716);transform-origin:0 0;">Untitled 2</div>
<svg style="position:absolute;left:589px;top:162px;" width="7" height="7" viewBox="0 0 7 7"><path d="M0.5 0.5 L6.5 6.5 M6.5 0.5 L0.5 6.5" stroke="#777" stroke-width="1"/></svg>
<div style="position:absolute;left:606px;top:156.5px;width:164px;height:18px;background:#eeeeee;border:1px solid #d6d6d6;border-bottom:none;border-radius:3px 3px 0 0;box-sizing:border-box"></div>
<svg style="position:absolute;left:614px;top:160px;" width="11" height="12" viewBox="0 0 11 12"><path d="M0 0 H7 L10 3 V12 H0 Z" fill="#2fae32"/><path d="M7 0 V3 H10" fill="none" stroke="#8fd98f" stroke-width="0.7"/><path d="M2 2 V10" stroke="#7fd47f" stroke-width="0.6"/></svg>
<div style="position:absolute;left:666.75px;top:161.19px;font-size:11px;line-height:11px;color:#333;white-space:nowrap;transform:scaleX(0.8716);transform-origin:0 0;">Untitled 3</div>
<svg style="position:absolute;left:751px;top:162px;" width="7" height="7" viewBox="0 0 7 7"><path d="M0.5 0.5 L6.5 6.5 M6.5 0.5 L0.5 6.5" stroke="#777" stroke-width="1"/></svg>
<div style="position:absolute;left:0px;top:173.5px;width:1200px;height:1px;background:#d0d0d0"></div>
<div style="position:absolute;left:0px;top:174.5px;width:1187px;height:14px;background:#efefef"></div>
<div style="position:absolute;left:37px;top:174.5px;width:142.5px;height:14px;background:#d3e4cd"></div>
<div style="position:absolute;left:0px;top:188px;width:1187px;height:1px;background:#bdbdbd"></div>
<svg style="position:absolute;left:652px;top:175px;" width="8" height="7" viewBox="0 0 8 7"><path d="M0.5 0.5 L3.5 4 L6.5 0.5 M3.5 4 V7" fill="none" stroke="#999" stroke-width="0.8"/></svg>
<div style="position:absolute;left:24px;top:175px;width:1px;height:13px;background:#cfcfcf"></div>
<div style="position:absolute;left:32px;top:175px;width:1px;height:13px;background:#cfcfcf"></div>
<div style="position:absolute;left:37px;top:175px;width:1px;height:13px;background:#cfcfcf"></div>
<div style="position:absolute;left:180px;top:175px;width:1px;height:13px;background:#cfcfcf"></div>
<div style="position:absolute;left:196px;top:175px;width:1px;height:13px;background:#cfcfcf"></div>
<div style="position:absolute;left:260px;top:175px;width:1px;height:13px;background:#cfcfcf"></div>
<div style="position:absolute;left:323px;top:175px;width:1px;height:13px;background:#cfcfcf"></div>
<div style="position:absolute;left:413px;top:175px;width:1px;height:13px;background:#cfcfcf"></div>
<div style="position:absolute;left:422px;top:175px;width:1px;height:13px;background:#cfcfcf"></div>
<div style="position:absolute;left:486px;top:175px;width:1px;height:13px;background:#cfcfcf"></div>
<div style="position:absolute;left:550px;top:175px;width:1px;height:13px;background:#cfcfcf"></div>
<div style="position:absolute;left:643px;top:175px;width:1px;height:13px;background:#cfcfcf"></div>
<div style="position:absolute;left:655px;top:175px;width:1px;height:13px;background:#cfcfcf"></div>
<div style="position:absolute;left:720px;top:175px;width:1px;height:13px;background:#cfcfcf"></div>
<div style="position:absolute;left:782px;top:175px;width:1px;height:13px;background:#cfcfcf"></div>
<div style="position:absolute;left:864px;top:175px;width:1px;height:13px;background:#cfcfcf"></div>
<div style="position:absolute;left:876px;top:175px;width:1px;height:13px;background:#cfcfcf"></div>
<div style="position:absolute;left:957px;top:175px;width:1px;height:13px;background:#cfcfcf"></div>
<div style="position:absolute;left:1014px;top:175px;width:1px;height:13px;background:#cfcfcf"></div>
<div style="position:absolute;left:1102px;top:175px;width:1px;height:13px;background:#cfcfcf"></div>
<div style="position:absolute;left:25.12px;top:177.80px;font-size:8.5px;line-height:8.5px;color:#2a2a2a;white-space:nowrap;-webkit-text-stroke:0.1px #2a2a2a;">A</div>
<div style="position:absolute;left:31.87px;top:177.80px;font-size:8.5px;line-height:8.5px;color:#2a2a2a;white-space:nowrap;-webkit-text-stroke:0.1px #2a2a2a;">B</div>
<div style="position:absolute;left:105.18px;top:177.80px;font-size:8.5px;line-height:8.5px;color:#2a2a2a;white-space:nowrap;-webkit-text-stroke:0.1px #2a2a2a;">C</div>
<div style="position:absolute;left:184.56px;top:177.80px;font-size:8.5px;line-height:8.5px;color:#2a2a2a;white-space:nowrap;-webkit-text-stroke:0.1px #2a2a2a;">D</div>
<div style="position:absolute;left:224.79px;top:177.80px;font-size:8.5px;line-height:8.5px;color:#2a2a2a;white-space:nowrap;-webkit-text-stroke:0.1px #2a2a2a;">E</div>
<div style="position:absolute;left:288.65px;top:177.80px;font-size:8.5px;line-height:8.5px;color:#2a2a2a;white-space:nowrap;-webkit-text-stroke:0.1px #2a2a2a;">F</div>
<div style="position:absolute;left:364.69px;top:177.80px;font-size:8.5px;line-height:8.5px;color:#2a2a2a;white-space:nowrap;-webkit-text-stroke:0.1px #2a2a2a;">G</div>
<div style="position:absolute;left:414.68px;top:177.80px;font-size:8.5px;line-height:8.5px;color:#2a2a2a;white-space:nowrap;-webkit-text-stroke:0.1px #2a2a2a;">H</div>
<div style="position:absolute;left:453.07px;top:177.80px;font-size:8.5px;line-height:8.5px;color:#2a2a2a;white-space:nowrap;-webkit-text-stroke:0.1px #2a2a2a;">I</div>
<div style="position:absolute;left:516.12px;top:177.80px;font-size:8.5px;line-height:8.5px;color:#2a2a2a;white-space:nowrap;-webkit-text-stroke:0.1px #2a2a2a;">J</div>
<div style="position:absolute;left:593.92px;top:177.80px;font-size:8.5px;line-height:8.5px;color:#2a2a2a;white-space:nowrap;-webkit-text-stroke:0.1px #2a2a2a;">K</div>
<div style="position:absolute;left:646.64px;top:177.80px;font-size:8.5px;line-height:8.5px;color:#2a2a2a;white-space:nowrap;-webkit-text-stroke:0.1px #2a2a2a;">L</div>
<div style="position:absolute;left:683.94px;top:177.80px;font-size:8.5px;line-height:8.5px;color:#2a2a2a;white-space:nowrap;-webkit-text-stroke:0.1px #2a2a2a;">O</div>
<div style="position:absolute;left:748.17px;top:177.80px;font-size:8.5px;line-height:8.5px;color:#2a2a2a;white-space:nowrap;-webkit-text-stroke:0.1px #2a2a2a;">P</div>
<div style="position:absolute;left:820.19px;top:177.80px;font-size:8.5px;line-height:8.5px;color:#2a2a2a;white-space:nowrap;-webkit-text-stroke:0.1px #2a2a2a;">Q</div>
<div style="position:absolute;left:867.43px;top:177.80px;font-size:8.5px;line-height:8.5px;color:#2a2a2a;white-space:nowrap;-webkit-text-stroke:0.1px #2a2a2a;">R</div>
<div style="position:absolute;left:913.79px;top:177.80px;font-size:8.5px;line-height:8.5px;color:#2a2a2a;white-space:nowrap;-webkit-text-stroke:0.1px #2a2a2a;">S</div>
<div style="position:absolute;left:982.53px;top:177.80px;font-size:8.5px;line-height:8.5px;color:#2a2a2a;white-space:nowrap;-webkit-text-stroke:0.1px #2a2a2a;">T</div>
<div style="position:absolute;left:1054.43px;top:177.80px;font-size:8.5px;line-height:8.5px;color:#2a2a2a;white-space:nowrap;-webkit-text-stroke:0.1px #2a2a2a;">U</div>
<div style="position:absolute;left:0px;top:189px;width:24px;height:594px;background:#efefef"></div>
<div style="position:absolute;left:23.5px;top:189px;width:1px;height:594px;background:#cfcfcf"></div>
<div style="position:absolute;left:0px;top:215px;width:24px;height:1px;background:#cfcfcf"></div>
<div style="position:absolute;left:9.95px;top:202.76px;font-size:8.2px;line-height:8.2px;color:#333;white-space:nowrap;transform:scaleX(0.9000);transform-origin:0 0;">1</div>
<div style="position:absolute;left:0px;top:241px;width:24px;height:1px;background:#cfcfcf"></div>
<div style="position:absolute;left:9.95px;top:228.76px;font-size:8.2px;line-height:8.2px;color:#333;white-space:nowrap;transform:scaleX(0.9000);transform-origin:0 0;">2</div>
<div style="position:absolute;left:0px;top:278px;width:24px;height:1px;background:#cfcfcf"></div>
<div style="position:absolute;left:9.95px;top:265.76px;font-size:8.2px;line-height:8.2px;color:#333;white-space:nowrap;transform:scaleX(0.9000);transform-origin:0 0;">3</div>
<div style="position:absolute;left:0px;top:282px;width:24px;height:1px;background:#cfcfcf"></div>
<div style="position:absolute;left:0px;top:308px;width:24px;height:1px;background:#cfcfcf"></div>
<div style="position:absolute;left:9.95px;top:295.76px;font-size:8.2px;line-height:8.2px;color:#333;white-space:nowrap;transform:scaleX(0.9000);transform-origin:0 0;">5</div>
<div style="position:absolute;left:0px;top:334px;width:24px;height:1px;background:#cfcfcf"></div>
<div style="position:absolute;left:9.95px;top:321.76px;font-size:8.2px;line-height:8.2px;color:#333;white-space:nowrap;transform:scaleX(0.9000);transform-origin:0 0;">6</div>
<div style="position:absolute;left:0px;top:360px;width:24px;height:1px;background:#cfcfcf"></div>
<div style="position:absolute;left:9.95px;top:347.76px;font-size:8.2px;line-height:8.2px;color:#333;white-space:nowrap;transform:scaleX(0.9000);transform-origin:0 0;">7</div>
<div style="position:absolute;left:0px;top:386px;width:24px;height:1px;background:#cfcfcf"></div>
<div style="position:absolute;left:9.95px;top:373.76px;font-size:8.2px;line-height:8.2px;color:#333;white-space:nowrap;transform:scaleX(0.9000);transform-origin:0 0;">8</div>
<div style="position:absolute;left:0px;top:412px;width:24px;height:1px;background:#cfcfcf"></div>
<div style="position:absolute;left:9.95px;top:399.26px;font-size:8.2px;line-height:8.2px;color:#333;white-space:nowrap;transform:scaleX(0.9000);transform-origin:0 0;">9</div>
<div style="position:absolute;left:0px;top:438px;width:24px;height:1px;background:#cfcfcf"></div>
<div style="position:absolute;left:7.90px;top:425.26px;font-size:8.2px;line-height:8.2px;color:#333;white-space:nowrap;transform:scaleX(0.9000);transform-origin:0 0;">10</div>
<div style="position:absolute;left:0px;top:464px;width:24px;height:1px;background:#cfcfcf"></div>
<div style="position:absolute;left:8.17px;top:451.26px;font-size:8.2px;line-height:8.2px;color:#333;white-space:nowrap;transform:scaleX(0.9000);transform-origin:0 0;">11</div>
<div style="position:absolute;left:0px;top:489px;width:24px;height:1px;background:#cfcfcf"></div>
<div style="position:absolute;left:7.90px;top:476.76px;font-size:8.2px;line-height:8.2px;color:#333;white-space:nowrap;transform:scaleX(0.9000);transform-origin:0 0;">12</div>
<div style="position:absolute;left:0px;top:515px;width:24px;height:1px;background:#cfcfcf"></div>
<div style="position:absolute;left:7.90px;top:502.76px;font-size:8.2px;line-height:8.2px;color:#333;white-space:nowrap;transform:scaleX(0.9000);transform-origin:0 0;">13</div>
<div style="position:absolute;left:0px;top:541px;width:24px;height:1px;background:#cfcfcf"></div>
<div style="position:absolute;left:7.90px;top:528.76px;font-size:8.2px;line-height:8.2px;color:#333;white-space:nowrap;transform:scaleX(0.9000);transform-origin:0 0;">14</div>
<div style="position:absolute;left:0px;top:567px;width:24px;height:1px;background:#cfcfcf"></div>
<div style="position:absolute;left:7.90px;top:554.26px;font-size:8.2px;line-height:8.2px;color:#333;white-space:nowrap;transform:scaleX(0.9000);transform-origin:0 0;">15</div>
<div style="position:absolute;left:0px;top:593px;width:24px;height:1px;background:#cfcfcf"></div>
<div style="position:absolute;left:7.90px;top:580.26px;font-size:8.2px;line-height:8.2px;color:#333;white-space:nowrap;transform:scaleX(0.9000);transform-origin:0 0;">16</div>
<div style="position:absolute;left:0px;top:618px;width:24px;height:1px;background:#cfcfcf"></div>
<div style="position:absolute;left:7.90px;top:605.76px;font-size:8.2px;line-height:8.2px;color:#333;white-space:nowrap;transform:scaleX(0.9000);transform-origin:0 0;">17</div>
<div style="position:absolute;left:0px;top:644px;width:24px;height:1px;background:#cfcfcf"></div>
<div style="position:absolute;left:7.90px;top:631.76px;font-size:8.2px;line-height:8.2px;color:#333;white-space:nowrap;transform:scaleX(0.9000);transform-origin:0 0;">18</div>
<div style="position:absolute;left:0px;top:670px;width:24px;height:1px;background:#cfcfcf"></div>
<div style="position:absolute;left:7.90px;top:657.76px;font-size:8.2px;line-height:8.2px;color:#333;white-space:nowrap;transform:scaleX(0.9000);transform-origin:0 0;">19</div>
<div style="position:absolute;left:0px;top:696px;width:24px;height:1px;background:#cfcfcf"></div>
<div style="position:absolute;left:7.90px;top:683.26px;font-size:8.2px;line-height:8.2px;color:#333;white-space:nowrap;transform:scaleX(0.9000);transform-origin:0 0;">20</div>
<div style="position:absolute;left:0px;top:722px;width:24px;height:1px;background:#cfcfcf"></div>
<div style="position:absolute;left:7.90px;top:709.26px;font-size:8.2px;line-height:8.2px;color:#333;white-space:nowrap;transform:scaleX(0.9000);transform-origin:0 0;">21</div>
<div style="position:absolute;left:0px;top:748px;width:24px;height:1px;background:#cfcfcf"></div>
<div style="position:absolute;left:7.90px;top:735.26px;font-size:8.2px;line-height:8.2px;color:#333;white-space:nowrap;transform:scaleX(0.9000);transform-origin:0 0;">22</div>
<div style="position:absolute;left:0px;top:774px;width:24px;height:1px;background:#cfcfcf"></div>
<div style="position:absolute;left:7.90px;top:761.26px;font-size:8.2px;line-height:8.2px;color:#333;white-space:nowrap;transform:scaleX(0.9000);transform-origin:0 0;">23</div>
<div style="position:absolute;left:0px;top:800px;width:24px;height:1px;background:#cfcfcf"></div>
<div style="position:absolute;left:7.90px;top:787.26px;font-size:8.2px;line-height:8.2px;color:#333;white-space:nowrap;transform:scaleX(0.9000);transform-origin:0 0;">24</div>
<div style="position:absolute;left:24.5px;top:189px;width:1162.5px;height:593.5px;background:#fff"></div>
<div style="position:absolute;left:24.5px;top:189px;width:155px;height:593.5px;background:#00a2e8"></div>
<div style="position:absolute;left:1101px;top:189px;width:1px;height:593.5px;background:#a9a9a9"></div>
<div style="position:absolute;left:1187px;top:174.5px;width:13px;height:608px;background:#f0f0f0"></div>
<svg style="position:absolute;left:1189.5px;top:179px;" width="7" height="4" viewBox="0 0 7 4"><path d="M0 4 L3.5 0 L7 4 Z" fill="#666"/></svg>
<div style="position:absolute;left:1189.8px;top:187.5px;width:7px;height:91.5px;background:#8e8e8e;border-radius:4px"></div>
<svg style="position:absolute;left:1189.5px;top:738px;" width="7" height="4" viewBox="0 0 7 4"><path d="M0 0 L3.5 4 L7 0 Z" fill="#666"/></svg>
<div style="position:absolute;left:1187px;top:746px;width:13px;height:1px;background:#dadada"></div>
<svg style="position:absolute;left:1190.5px;top:749px;" width="5" height="7" viewBox="0 0 5 7"><path d="M0.5 3 L2.5 1 L4.5 3 Z" stroke="#555" stroke-width="0.8" fill="#555"/><path d="M2.5 3 V5 M0 6 H5" stroke="#555" stroke-width="0.9"/></svg>
<div style="position:absolute;left:1187px;top:758px;width:13px;height:1px;background:#dadada"></div>
<div style="position:absolute;left:1191px;top:763px;width:4px;height:4px;background:#e02020;border-radius:50%"></div>
<div style="position:absolute;left:1187px;top:770px;width:13px;height:1px;background:#dadada"></div>
<svg style="position:absolute;left:1190.5px;top:773px;" width="5" height="7" viewBox="0 0 5 7"><path d="M0.5 0.5 L2.5 2.5 L4.5 0.5 M0.5 3.5 L2.5 5.5 L4.5 3.5" stroke="#555" stroke-width="1" fill="none"/></svg>
<div style="position:absolute;left:0px;top:782.5px;width:1200px;height:12.5px;background:#f0f0f0"></div>
<svg style="position:absolute;left:5px;top:785px;" width="4" height="7" viewBox="0 0 4 7"><path d="M4 0 L0 3.5 L4 7 Z" fill="#777"/></svg>
<div style="position:absolute;left:13px;top:785px;width:481px;height:7px;background:#8e8e8e;border-radius:4px"></div>
<svg style="position:absolute;left:1180px;top:785px;" width="4" height="7" viewBox="0 0 4 7"><path d="M0 0 L4 3.5 L0 7 Z" fill="#555"/></svg>
<div style="position:absolute;left:1187px;top:782.5px;width:1px;height:12.5px;background:#d0d0d0"></div>
<svg style="position:absolute;left:1188px;top:783px;" width="12" height="12" viewBox="0 0 12 12"><path d="M0 2.5 H11.5 M2.5 0 V11.5 M5 5 L10 10 M5 5 H8.5 M5 5 V8.5" stroke="#555" stroke-width="0.9" fill="none"/></svg>
<div style="position:absolute;left:0px;top:795px;width:1200px;height:1px;background:#d8d8d8"></div>
<div style="position:absolute;left:0px;top:796px;width:1200px;height:22px;background:#f0f0f0"></div>
<div style="position:absolute;left:631px;top:799px;width:1px;height:13px;background:#cfcfcf"></div>
<svg style="position:absolute;left:930px;top:799px;" width="13" height="13" viewBox="0 0 13 13"><path d="M2 6 A4.5 4.5 0 0 1 10 3.5 M11 7 A4.5 4.5 0 0 1 3 9.5" fill="none" stroke="#bbb" stroke-width="1.2"/><path d="M8.5 1.5 L11 4 L8 5 Z M4.5 11.5 L2 9 L5 8 Z" fill="#bbb"/></svg>
<div style="position:absolute;left:957.50px;top:800.53px;font-size:10px;line-height:10px;color:#333;white-space:nowrap;transform:scaleX(0.9371);transform-origin:0 0;">Ins</div>
<div style="position:absolute;left:984px;top:799px;width:1px;height:14px;background:#cfcfcf"></div>
<div style="position:absolute;left:989.50px;top:800.53px;font-size:10px;line-height:10px;color:#333;white-space:nowrap;transform:scaleX(0.8878);transform-origin:0 0;">AUTO</div>
<div style="position:absolute;left:1027px;top:805px;width:5px;height:1px;background:#e53935"></div>
<div style="position:absolute;left:1037px;top:805px;width:91px;height:1px;background:#c8c8c8"></div>
<div style="position:absolute;left:1078px;top:801px;width:8px;height:8px;background:#fff;border:1px solid #666;border-radius:50%;box-sizing:border-box"></div>
<svg style="position:absolute;left:1132.5px;top:802px;" width="6" height="6" viewBox="0 0 6 6"><path d="M3 0 V6 M0 3 H6" stroke="#43a047" stroke-width="0.9"/></svg>
<div style="position:absolute;left:1152.00px;top:800.53px;font-size:10px;line-height:10px;color:#333;white-space:nowrap;transform:scaleX(0.8602);transform-origin:0 0;">100%</div>
<svg style="position:absolute;left:1181px;top:800px;" width="7" height="5" viewBox="0 0 7 5"><path d="M0.5 0.5 L2.5 2.5 L0.5 4.5 M4 0.5 L6 2.5 L4 4.5" fill="none" stroke="#555" stroke-width="1.1"/></svg>
<svg style="position:absolute;left:0px;top:813px;" width="5" height="5" viewBox="0 0 5 5"><path d="M0 0 C0.3 2.8 2.2 4.7 5 5 H0 Z" fill="#c4c4c4"/></svg>
<svg style="position:absolute;left:1195px;top:813px;" width="5" height="5" viewBox="0 0 5 5"><path d="M5 0 C4.7 2.8 2.8 4.7 0 5 H5 Z" fill="#c4c4c4"/></svg>
<div style="position:absolute;left:0;top:0;width:1187px;height:782.5px;overflow:hidden">
<svg style="position:absolute;left:83px;top:198.75px;" width="50" height="50" viewBox="0 0 50 50"><rect x="0" y="0" width="50" height="50" rx="3.5" fill="#000"/><path d="M9.5 39.5 L50 21 V27 L11 40.5 C9.5 41 8.8 40 9.5 39.5 Z" fill="#00a2e8"/></svg>
<div style="position:absolute;left:62.00px;top:255.10px;font-size:18.31px;line-height:18.31px;color:#fff;font-weight:bold;white-space:nowrap;transform:scaleX(0.5613);transform-origin:0 0;letter-spacing:1.5px;-webkit-text-stroke:0.4px #fff;">MONEY</div>
<div style="position:absolute;left:107.50px;top:262.92px;font-size:8.72px;line-height:8.72px;color:#fff;white-space:nowrap;transform:scaleX(0.6237);transform-origin:0 0;letter-spacing:0.8px;-webkit-text-stroke:0.25px #fff;">for CALCULATE</div>
<div style="position:absolute;left:44.60px;top:286.60px;font-size:15.12px;line-height:15.12px;color:#fff;font-weight:bold;white-space:nowrap;transform:scaleX(0.5984);transform-origin:0 0;letter-spacing:1.2px;">Dashboard</div>
<div style="position:absolute;left:44.60px;top:312.83px;font-size:15.55px;line-height:15.55px;color:#fff;font-weight:bold;white-space:nowrap;transform:scaleX(0.5996);transform-origin:0 0;letter-spacing:1.2px;">Overview</div>
<div style="position:absolute;left:44.60px;top:338.28px;font-size:15.26px;line-height:15.26px;color:#fff;font-weight:bold;white-space:nowrap;transform:scaleX(0.5915);transform-origin:0 0;letter-spacing:1.2px;">Collection</div>
<div style="position:absolute;left:44.60px;top:364.57px;font-size:14.68px;line-height:14.68px;color:#fff;font-weight:bold;white-space:nowrap;transform:scaleX(0.6180);transform-origin:0 0;letter-spacing:1.2px;">Settings</div>
<div style="position:absolute;left:44.60px;top:389.83px;font-size:15.55px;line-height:15.55px;color:#fff;font-weight:bold;white-space:nowrap;transform:scaleX(0.5842);transform-origin:0 0;letter-spacing:1.2px;">Help &amp; Support</div>
<div style="position:absolute;left:198.00px;top:219.46px;font-size:15.99px;line-height:15.99px;color:#1e1e1e;font-weight:bold;white-space:nowrap;transform:scaleX(0.6496);transform-origin:0 0;letter-spacing:1px;">Dashboard</div>
<div style="position:absolute;left:198.00px;top:243.32px;font-size:14.39px;line-height:14.39px;color:#8a8a8a;white-space:nowrap;transform:scaleX(0.6728);transform-origin:0 0;letter-spacing:1px;-webkit-text-stroke:0.45px #8a8a8a;">Your finances at a glance JJJJ</div>
<div style="position:absolute;left:866.00px;top:220.68px;font-size:13.37px;line-height:13.37px;color:#222;font-weight:bold;white-space:nowrap;transform:scaleX(0.5661);transform-origin:0 0;letter-spacing:0.8px;">Compare the current year with</div>
<div style="position:absolute;left:1013px;top:215.7px;width:89px;height:26.3px;background:#f0f0f0;border:1.3px solid #4a4a4a;box-sizing:border-box"></div>
<div style="position:absolute;left:1049.00px;top:220.93px;font-size:13.08px;line-height:13.08px;color:#222;font-weight:bold;white-space:nowrap;transform:scaleX(0.6118);transform-origin:0 0;">2021</div>
<div style="position:absolute;left:195.6px;top:308.5px;width:218.00000000000003px;height:77.5px;background:#f2f2f2;border:1px solid #c9c9c9;border-top:none;box-sizing:border-box"></div>
<div style="position:absolute;left:195.6px;top:283px;width:218.00000000000003px;height:25.5px;background:#00a2e8"></div>
<div style="position:absolute;left:196.6px;top:364.6px;width:216.00000000000003px;height:1px;background:#fbfbfb"></div>
<div style="position:absolute;left:279.20px;top:290.19px;font-size:12.06px;line-height:12.06px;color:#3d3d3d;white-space:nowrap;transform:scaleX(0.6223);transform-origin:0 0;letter-spacing:1px;-webkit-text-stroke:0.4px #3d3d3d;">Total income</div>
<div style="position:absolute;left:264.60px;top:319.60px;font-size:25.87px;line-height:25.87px;color:#3a3a3a;white-space:nowrap;transform:scaleX(0.5750);transform-origin:0 0;letter-spacing:2.5px;-webkit-text-stroke:0.75px #3a3a3a;">22.714,00</div>
<div style="position:absolute;left:283.00px;top:360.02px;font-size:8.72px;line-height:8.72px;color:#222;font-weight:bold;white-space:nowrap;transform:scaleX(0.7639);transform-origin:0 0;">-0,2%</div>
<div style="position:absolute;left:275.00px;top:370.39px;font-size:10.17px;line-height:10.17px;color:#2a2a2a;font-weight:bold;white-space:nowrap;transform:scaleX(0.6011);transform-origin:0 0;letter-spacing:1px;">compared to JJJJ</div>
<div style="position:absolute;left:422.6px;top:308.5px;width:221.0px;height:77.5px;background:#f2f2f2;border:1px solid #c9c9c9;border-top:none;box-sizing:border-box"></div>
<div style="position:absolute;left:422.6px;top:283px;width:221.0px;height:25.5px;background:#00a2e8"></div>
<div style="position:absolute;left:423.6px;top:364.6px;width:219.0px;height:1px;background:#fbfbfb"></div>
<div style="position:absolute;left:502.70px;top:290.19px;font-size:12.06px;line-height:12.06px;color:#3d3d3d;white-space:nowrap;transform:scaleX(0.6310);transform-origin:0 0;letter-spacing:1px;-webkit-text-stroke:0.4px #3d3d3d;">Total expenses</div>
<div style="position:absolute;left:492.90px;top:319.60px;font-size:25.87px;line-height:25.87px;color:#3a3a3a;white-space:nowrap;transform:scaleX(0.5779);transform-origin:0 0;letter-spacing:2.5px;-webkit-text-stroke:0.75px #3a3a3a;">14.790,00</div>
<div style="position:absolute;left:509.00px;top:360.02px;font-size:8.72px;line-height:8.72px;color:#222;font-weight:bold;white-space:nowrap;transform:scaleX(0.7601);transform-origin:0 0;">-18,7%</div>
<div style="position:absolute;left:504.65px;top:370.39px;font-size:10.17px;line-height:10.17px;color:#2a2a2a;font-weight:bold;white-space:nowrap;transform:scaleX(0.6080);transform-origin:0 0;letter-spacing:1px;">compared to JJJJ</div>
<div style="position:absolute;left:655px;top:308.5px;width:209.60000000000002px;height:77.5px;background:#f2f2f2;border:1px solid #c9c9c9;border-top:none;box-sizing:border-box"></div>
<div style="position:absolute;left:655px;top:283px;width:209.60000000000002px;height:25.5px;background:#00a2e8"></div>
<div style="position:absolute;left:656px;top:364.6px;width:193px;height:1px;background:#fbfbfb"></div>
<div style="position:absolute;left:736.70px;top:290.19px;font-size:12.06px;line-height:12.06px;color:#3d3d3d;white-space:nowrap;transform:scaleX(0.6251);transform-origin:0 0;letter-spacing:1px;-webkit-text-stroke:0.4px #3d3d3d;">Fixed costs</div>
<div style="position:absolute;left:725.10px;top:319.60px;font-size:25.87px;line-height:25.87px;color:#3a3a3a;white-space:nowrap;transform:scaleX(0.5676);transform-origin:0 0;letter-spacing:2.5px;-webkit-text-stroke:0.75px #3a3a3a;">6.150,00</div>
<div style="position:absolute;left:741.40px;top:360.02px;font-size:8.72px;line-height:8.72px;color:#222;font-weight:bold;white-space:nowrap;transform:scaleX(0.7456);transform-origin:0 0;">-15,7%</div>
<div style="position:absolute;left:722.00px;top:370.39px;font-size:10.17px;line-height:10.17px;color:#2a2a2a;font-weight:bold;white-space:nowrap;transform:scaleX(0.6109);transform-origin:0 0;letter-spacing:1px;">compared to JJJJ</div>
<div style="position:absolute;left:876.5px;top:308.5px;width:225.0px;height:77.5px;background:#f2f2f2;border:1px solid #c9c9c9;border-top:none;border-right:none;box-sizing:border-box"></div>
<div style="position:absolute;left:876.5px;top:283px;width:225.0px;height:25.5px;background:#00a2e8"></div>
<div style="position:absolute;left:877.5px;top:364.6px;width:223.0px;height:1px;background:#fbfbfb"></div>
<div style="position:absolute;left:960.20px;top:290.19px;font-size:12.06px;line-height:12.06px;color:#3d3d3d;white-space:nowrap;transform:scaleX(0.6348);transform-origin:0 0;letter-spacing:1px;-webkit-text-stroke:0.4px #3d3d3d;">Variable costs</div>
<div style="position:absolute;left:952.45px;top:319.60px;font-size:25.87px;line-height:25.87px;color:#3a3a3a;white-space:nowrap;transform:scaleX(0.5982);transform-origin:0 0;letter-spacing:2.5px;-webkit-text-stroke:0.75px #3a3a3a;">8.640,00</div>
<div style="position:absolute;left:980.40px;top:353.62px;font-size:8.72px;line-height:8.72px;color:#222;font-weight:bold;white-space:nowrap;transform:scaleX(0.7674);transform-origin:0 0;">-20,7%</div>
<div style="position:absolute;left:959.85px;top:369.39px;font-size:10.17px;line-height:10.17px;color:#2a2a2a;font-weight:bold;white-space:nowrap;transform:scaleX(0.6138);transform-origin:0 0;letter-spacing:1px;">compared to JJJJ</div>
<div style="position:absolute;left:195.6px;top:437.5px;width:218.00000000000003px;height:77.5px;background:#f2f2f2;border-left:1px solid #c9c9c9;border-right:1px solid #c9c9c9;box-sizing:border-box"></div>
<div style="position:absolute;left:195.6px;top:412px;width:218.00000000000003px;height:25.5px;background:#00a2e8"></div>
<div style="position:absolute;left:196.6px;top:493.4px;width:216.00000000000003px;height:1px;background:#fbfbfb"></div>
<div style="position:absolute;left:288.40px;top:419.19px;font-size:12.06px;line-height:12.06px;color:#3d3d3d;white-space:nowrap;transform:scaleX(0.6168);transform-origin:0 0;letter-spacing:1px;-webkit-text-stroke:0.4px #3d3d3d;">Balance</div>
<div style="position:absolute;left:268.10px;top:448.60px;font-size:25.87px;line-height:25.87px;color:#3a3a3a;white-space:nowrap;transform:scaleX(0.5974);transform-origin:0 0;letter-spacing:2.5px;-webkit-text-stroke:0.75px #3a3a3a;">7.924,00</div>
<div style="position:absolute;left:289.00px;top:483.02px;font-size:8.72px;line-height:8.72px;color:#222;font-weight:bold;white-space:nowrap;transform:scaleX(0.7601);transform-origin:0 0;">-20,7%</div>
<div style="position:absolute;left:275.60px;top:499.39px;font-size:10.17px;line-height:10.17px;color:#2a2a2a;font-weight:bold;white-space:nowrap;transform:scaleX(0.6089);transform-origin:0 0;letter-spacing:1px;">compared to JJJJ</div>
<div style="position:absolute;left:422.6px;top:437.5px;width:221.0px;height:77.5px;background:#f2f2f2;border-left:1px solid #c9c9c9;border-right:1px solid #c9c9c9;box-sizing:border-box"></div>
<div style="position:absolute;left:422.6px;top:412px;width:221.0px;height:25.5px;background:#00a2e8"></div>
<div style="position:absolute;left:423.6px;top:493.4px;width:219.0px;height:1px;background:#fbfbfb"></div>
<div style="position:absolute;left:501.20px;top:419.19px;font-size:12.06px;line-height:12.06px;color:#3d3d3d;white-space:nowrap;transform:scaleX(0.6203);transform-origin:0 0;letter-spacing:1px;-webkit-text-stroke:0.4px #3d3d3d;">Average income</div>
<div style="position:absolute;left:497.60px;top:448.60px;font-size:25.87px;line-height:25.87px;color:#3a3a3a;white-space:nowrap;transform:scaleX(0.5808);transform-origin:0 0;letter-spacing:2.5px;-webkit-text-stroke:0.75px #3a3a3a;">3.785,67</div>
<div style="position:absolute;left:526.00px;top:488.42px;font-size:8.72px;line-height:8.72px;color:#222;font-weight:bold;white-space:nowrap;transform:scaleX(0.7288);transform-origin:0 0;">-0,2%</div>
<div style="position:absolute;left:504.35px;top:500.39px;font-size:10.17px;line-height:10.17px;color:#2a2a2a;font-weight:bold;white-space:nowrap;transform:scaleX(0.6080);transform-origin:0 0;letter-spacing:1px;">compared to JJJJ</div>
<div style="position:absolute;left:655px;top:437.5px;width:209.60000000000002px;height:78.0px;background:#f2f2f2;border-left:1px solid #c9c9c9;border-right:1px solid #c9c9c9;box-sizing:border-box"></div>
<div style="position:absolute;left:655px;top:412px;width:209.60000000000002px;height:25.5px;background:#00a2e8"></div>
<div style="position:absolute;left:656px;top:493.4px;width:193px;height:1px;background:#fbfbfb"></div>
<div style="position:absolute;left:719.90px;top:419.19px;font-size:12.06px;line-height:12.06px;color:#3d3d3d;white-space:nowrap;transform:scaleX(0.6193);transform-origin:0 0;letter-spacing:1px;-webkit-text-stroke:0.4px #3d3d3d;">% of fixed expenses</div>
<div style="position:absolute;left:740.30px;top:448.60px;font-size:25.87px;line-height:25.87px;color:#3a3a3a;white-space:nowrap;transform:scaleX(0.6428);transform-origin:0 0;letter-spacing:2.5px;-webkit-text-stroke:0.75px #3a3a3a;">42%</div>
<div style="position:absolute;left:741.40px;top:489.02px;font-size:8.72px;line-height:8.72px;color:#222;font-weight:bold;white-space:nowrap;transform:scaleX(0.7456);transform-origin:0 0;">-15,7%</div>
<div style="position:absolute;left:721.00px;top:500.39px;font-size:10.17px;line-height:10.17px;color:#2a2a2a;font-weight:bold;white-space:nowrap;transform:scaleX(0.6109);transform-origin:0 0;letter-spacing:1px;">compared to JJJJ</div>
<div style="position:absolute;left:876.5px;top:437.5px;width:225.0px;height:77.5px;background:#f2f2f2;border-left:1px solid #c9c9c9;border-right:1px solid #c9c9c9;border-right:none;box-sizing:border-box"></div>
<div style="position:absolute;left:876.5px;top:412px;width:225.0px;height:25.5px;background:#00a2e8"></div>
<div style="position:absolute;left:877.5px;top:493.4px;width:223.0px;height:1px;background:#fbfbfb"></div>
<div style="position:absolute;left:942.60px;top:419.19px;font-size:12.06px;line-height:12.06px;color:#3d3d3d;white-space:nowrap;transform:scaleX(0.6245);transform-origin:0 0;letter-spacing:1px;-webkit-text-stroke:0.4px #3d3d3d;">% of variable expenses</div>
<div style="position:absolute;left:969.95px;top:448.60px;font-size:25.87px;line-height:25.87px;color:#3a3a3a;white-space:nowrap;transform:scaleX(0.6276);transform-origin:0 0;letter-spacing:2.5px;-webkit-text-stroke:0.75px #3a3a3a;">58%</div>
<div style="position:absolute;left:987.40px;top:483.62px;font-size:8.72px;line-height:8.72px;color:#222;font-weight:bold;white-space:nowrap;transform:scaleX(0.7674);transform-origin:0 0;">-20,7%</div>
<div style="position:absolute;left:967.00px;top:500.39px;font-size:10.17px;line-height:10.17px;color:#2a2a2a;font-weight:bold;white-space:nowrap;transform:scaleX(0.6148);transform-origin:0 0;letter-spacing:1px;">compared to JJJJ</div>
<div style="position:absolute;left:195px;top:534.5px;width:906px;height:1px;background:#c4c4c4"></div>
<div style="position:absolute;left:195px;top:534.5px;width:460px;height:1px;background:#a8a8a8"></div>
<div style="position:absolute;left:195px;top:534.5px;width:1px;height:248px;background:#b8b8b8"></div>
<div style="position:absolute;left:388px;top:564px;width:674px;height:1px;background:#b4b4b4"></div>
<div style="position:absolute;left:258.00px;top:555.88px;font-size:24px;line-height:24px;color:#111;white-space:nowrap;transform:scaleX(0.9950);transform-origin:0 0;">30000,00 €</div>
<div style="position:absolute;left:388px;top:607px;width:674px;height:1px;background:#b4b4b4"></div>
<div style="position:absolute;left:258.00px;top:598.08px;font-size:24px;line-height:24px;color:#111;white-space:nowrap;transform:scaleX(0.9950);transform-origin:0 0;">25000,00 €</div>
<div style="position:absolute;left:388px;top:649px;width:674px;height:1px;background:#b4b4b4"></div>
<div style="position:absolute;left:258.00px;top:639.98px;font-size:24px;line-height:24px;color:#111;white-space:nowrap;transform:scaleX(0.9950);transform-origin:0 0;">20000,00 €</div>
<div style="position:absolute;left:388px;top:690px;width:674px;height:1px;background:#b4b4b4"></div>
<div style="position:absolute;left:258.00px;top:681.88px;font-size:24px;line-height:24px;color:#111;white-space:nowrap;transform:scaleX(0.9950);transform-origin:0 0;">15000,00 €</div>
<div style="position:absolute;left:388px;top:732px;width:674px;height:1px;background:#b4b4b4"></div>
<div style="position:absolute;left:258.00px;top:723.78px;font-size:24px;line-height:24px;color:#111;white-space:nowrap;transform:scaleX(0.9950);transform-origin:0 0;">10000,00 €</div>
<div style="position:absolute;left:388px;top:774px;width:674px;height:1px;background:#b4b4b4"></div>
<div style="position:absolute;left:271.50px;top:765.68px;font-size:24px;line-height:24px;color:#111;white-space:nowrap;transform:scaleX(0.9929);transform-origin:0 0;">5000,00 €</div>
<div style="position:absolute;left:396px;top:564px;width:1px;height:218.5px;background:#b4b4b4"></div>
<div style="position:absolute;left:458px;top:759px;width:42.50px;height:23.50px;background:#4268a7"></div>
<div style="position:absolute;left:541px;top:748.5px;width:42.50px;height:34.00px;background:#7898c6"></div>
<div style="position:absolute;left:583.5px;top:772px;width:40.50px;height:10.50px;background:#95acd3"></div>
<div style="position:absolute;left:624px;top:738.6px;width:42.20px;height:43.90px;background:#b4c4df"></div>
<div style="position:absolute;left:666.2px;top:704.6px;width:42.30px;height:77.90px;background:#d0dbeb"></div>
<div style="position:absolute;left:708.5px;top:728.3px;width:40.80px;height:54.20px;background:#33578b"></div>
<div style="position:absolute;left:749.3px;top:695.3px;width:41.70px;height:87.20px;background:#3f68a3"></div>
<div style="position:absolute;left:791px;top:661.7px;width:41.70px;height:120.80px;background:#5a7eba"></div>
<div style="position:absolute;left:832.7px;top:685.7px;width:41.60px;height:96.80px;background:#7597c6"></div>
<div style="position:absolute;left:874.3px;top:651.7px;width:41.70px;height:130.80px;background:#97add2"></div>
<div style="position:absolute;left:916px;top:618.3px;width:42.30px;height:164.20px;background:#b3c3de"></div>
<div style="position:absolute;left:958.3px;top:641.7px;width:41.00px;height:140.80px;background:#d0dbea"></div>
<div style="position:absolute;left:999.3px;top:607.7px;width:42.40px;height:174.80px;background:#345687"></div>
</div>
<div style="position:absolute;left:0;top:0;width:1187px;height:782.5px;overflow:hidden">
<div style="position:absolute;left:849px;top:364.4px;width:1px;height:21px;background:#fbfbfb"></div>
<div style="position:absolute;left:849px;top:493.4px;width:1px;height:22px;background:#fbfbfb"></div>
</div>
</body></html>
